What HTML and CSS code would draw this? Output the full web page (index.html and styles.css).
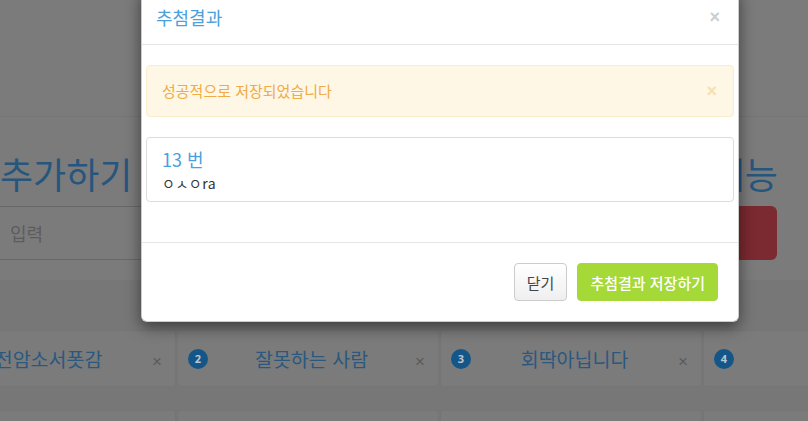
FILE: index.html
```html
<!DOCTYPE html>
<html lang="ko">
<head>
  <meta charset="UTF-8" />
  <title>추첨결과</title>
  <link rel="stylesheet" href="styles.css">
</head>
<body>
  <div class="nav"></div>

  <div class="top">
    <div class="col col-left">
      <h1 class="title">추가하기</h1>
      <input class="name-input" type="text" placeholder="입력" />
    </div>
    <div class="col col-right">
      <h1 class="title title-right">랜덤 뽑기 기능</h1>
      <button class="btn-red"></button>
    </div>
  </div>

  <div class="list">
    <div class="tiles">
      <div class="tile"><span class="badge">1</span><span class="name">전암소서폿감</span><span class="del">&times;</span></div>
      <div class="tile"><span class="badge">2</span><span class="name">잘못하는 사람</span><span class="del">&times;</span></div>
      <div class="tile"><span class="badge">3</span><span class="name">회딱아닙니다</span><span class="del">&times;</span></div>
      <div class="tile"><span class="badge">4</span><span class="name">한조</span><span class="del">&times;</span></div>
      <div class="tile"></div>
      <div class="tile"></div>
      <div class="tile"></div>
      <div class="tile"></div>
    </div>
  </div>

  <!-- 결과 모달 -->
  <div class="modal">
    <div class="modal-header">
      <h4 class="modal-title">추첨결과</h4>
      <span class="close">&times;</span>
    </div>
    <div class="modal-body">
      <div class="alert">
        <span>성공적으로 저장되었습니다</span>
        <span class="alert-close">&times;</span>
      </div>
      <div class="result-card">
        <div class="result-num">13 번</div>
        <div class="result-name">ㅇㅅㅇra</div>
      </div>
    </div>
    <div class="modal-footer">
      <button class="btn btn-default">닫기</button>
      <button class="btn btn-green">추첨결과 저장하기</button>
    </div>
  </div>
</body>
</html>
```

FILE: styles.css
```css
* {
  box-sizing: border-box;
}
body {
  margin: 0;
  background: #7b7b7b;
  font-family: 'Noto Sans CJK KR', 'Open Sans', sans-serif;
  color: #333;
  overflow: hidden;
  height: 421px;
}
.nav {
  height: 117px;
  border-bottom: 1px solid #747474;
}
/* 상단 입력 영역 */
.top {
  display: flex;
  gap: 30px;
  padding: 36px 31px 20px 0;
}
.col {
  flex: 1;
  display: flex;
  flex-direction: column;
  gap: 13px;
}
.title {
  margin: 0;
  font-size: 36px;
  line-height: 40px;
  font-weight: 400;
  color: #27567d;
}
.title-right {
  text-align: right;
  letter-spacing: -1px;
}
.name-input {
  height: 54px;
  border: none;
  border-top: 1px solid #686868;
  border-bottom: 1px solid #686868;
  background: transparent;
  padding: 0 10px;
  font-family: inherit;
  font-size: 18px;
}
.name-input::placeholder {
  color: #5c5c5c;
}
.btn-red {
  height: 54px;
  border: none;
  border-radius: 6px;
  background: #7a2a30;
}
/* 목록 */
.list {
  background: #777;
  padding-top: 50px;
  height: 200px;
}
.tiles {
  display: grid;
  grid-template-columns: repeat(4, 262px);
  column-gap: 1px;
  row-gap: 23px;
  margin-left: -86px;
}
.tile {
  height: 57px;
  background: #7b7b7b;
  border: 1px solid #757575;
  border-radius: 3px;
  display: flex;
  align-items: center;
  padding: 0 13px 0 10px;
}
.badge {
  width: 20px;
  height: 20px;
  border-radius: 50%;
  background: #155689;
  color: #b8c6d2;
  font-size: 11px;
  font-weight: 700;
  display: flex;
  align-items: center;
  justify-content: center;
  font-family: 'Open Sans', sans-serif;
}
.name {
  flex: 1;
  text-align: center;
  font-size: 19.5px;
  color: #2a587f;
}
.del {
  font-family: 'Liberation Sans', sans-serif;
  color: #5a5a5a;
  font-size: 17px;
  line-height: 1;
  margin-top: 5px;
}
/* 모달 */
.modal {
  position: absolute;
  top: -11px;
  left: 141px;
  width: 598px;
  background: #fff;
  border: 1px solid rgba(0,0,0,0.2);
  border-radius: 6px;
  box-shadow: 0 5px 15px rgba(0,0,0,0.5);
}
.modal-header {
  display: flex;
  align-items: center;
  justify-content: space-between;
  padding: 15px 18px 15px 14px;
  border-bottom: 1px solid #e5e5e5;
}
.modal-title {
  margin: 0;
  font-size: 18px;
  line-height: 24px;
  font-weight: 400;
  color: #4ba1dc;
}
.close,
.alert-close {
  font-family: 'Liberation Sans', sans-serif;
  font-weight: 700;
  font-size: 18px;
  line-height: 1;
}
.close {
  color: #cdcdcd;
}
.modal-body {
  padding: 20px 4px;
}
.alert {
  display: flex;
  justify-content: space-between;
  align-items: center;
  padding: 15px 16px 15px 15px;
  background: #fef7e6;
  border: 1px solid #fbeccd;
  border-radius: 4px;
  color: #f0ab45;
  font-size: 15px;
  line-height: 20px;
  margin-bottom: 20px;
}
.alert-close {
  color: #f6dfb0;
}
.result-card {
  border: 1px solid #dcdcdc;
  border-radius: 4px;
  padding: 9px 15px 9px;
  margin-bottom: 20px;
}
.result-num {
  font-size: 18px;
  line-height: 24px;
  color: #4aa0dc;
  margin-bottom: 3px;
}
.result-name {
  font-size: 14px;
  line-height: 18px;
  letter-spacing: 0.5px;
  color: #333;
}
.modal-footer {
  display: flex;
  justify-content: flex-end;
  gap: 10px;
  padding: 20px;
  border-top: 1px solid #e5e5e5;
}
.btn {
  height: 38px;
  padding: 0 12px;
  border-radius: 4px;
  font-family: inherit;
  font-size: 15px;
  cursor: pointer;
}
.btn-default {
  background: linear-gradient(#fff, #efefef);
  border: 1px solid #ccc;
  color: #444;
}
.btn-green {
  background: #a4d937;
  border: 1px solid #a4d937;
  color: #fff;
  font-weight: 500;
}
```
